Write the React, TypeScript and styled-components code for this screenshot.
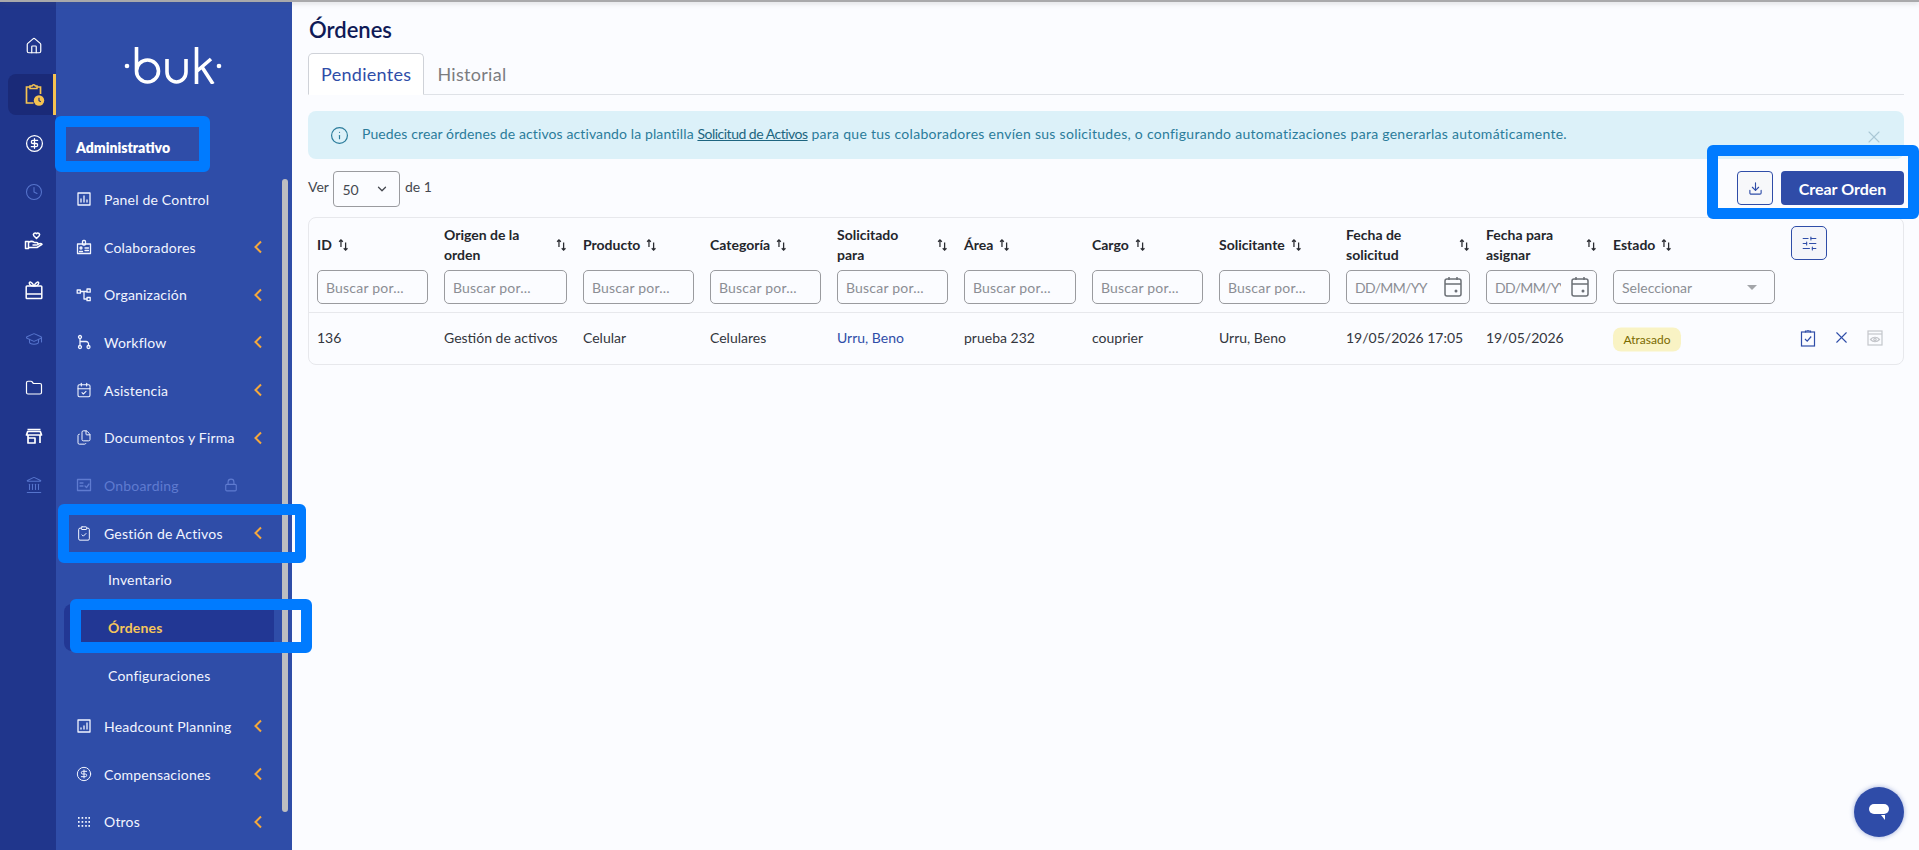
import React from "react";
import styled, { createGlobalStyle } from "styled-components";
import {
  House, CircleDollarSign, Clock, GraduationCap, Folder, Landmark,
  CalendarCheck, Files, Lock, ClipboardCheck, Info, X, ChevronDown, Download,
  SlidersHorizontal,
} from "lucide-react";

const Global = createGlobalStyle`
  html, body { margin: 0; padding: 0; height: 850px; overflow: hidden; }
  body { font-family: Lato, "Noto Sans", sans-serif; font-size: 14px; color: #33363d; background: #fbfcff; }
  * { box-sizing: border-box; }
`;

const Page = styled.div`
  position: relative;
  display: flex;
  width: 1919px;
  height: 850px;
  overflow: hidden;
`;
const TopShade = styled.div`
  position: absolute;
  left: 0; right: 0; top: 0;
  height: 2px;
  background: #a9a9ab;
  box-shadow: 0 1px 5px rgba(90, 90, 90, 0.35);
`;
const Rail = styled.aside`
  width: 56px;
  flex: none;
  background: #20368c;
  padding: 25.5px 0 0 8px;
  display: flex;
  flex-direction: column;
  gap: 7.8px;
`;
const RailItem = styled.div<{ $active?: boolean; $dim?: boolean }>`
  height: 41px;
  width: 48px;
  display: flex;
  align-items: center;
  justify-content: center;
  padding-left: 7px;
  color: ${(p) => (p.$dim ? "#5674cc" : "#ffffff")};
  border-radius: 8px 0 0 8px;
  background: ${(p) => (p.$active ? "#1a2a78" : "transparent")};
  border-right: 3px solid ${(p) => (p.$active ? "#f5c351" : "transparent")};
`;
const Sidebar = styled.aside`
  position: relative;
  width: 236px;
  flex: none;
  background: #2f4da8;
  padding-top: 47px;
  color: #fff;
`;
const LogoWrap = styled.div`
  padding-left: 68px;
  height: 37px;
  display: flex;
`;
const SectionTitle = styled.div`
  margin: 52px 0 15.5px 20px;
  height: 24px;
  line-height: 24px;
  font-weight: 800;
  font-size: 14px;
  color: #fff;
`;
const Nav = styled.nav`
  display: flex;
  flex-direction: column;
`;
const MenuItem = styled.div<{ $dim?: boolean; $gap?: number }>`
  height: 47.7px;
  margin-top: ${(p) => p.$gap ?? 0}px;
  display: flex;
  align-items: center;
  padding: 0 30px 0 20px;
  color: ${(p) => (p.$dim ? "#5f7bd0" : "#f2f5ff")};
  font-size: 14px;
  letter-spacing: 0.2px;
`;
const MenuIcon = styled.span`
  width: 16px;
  height: 16px;
  margin-right: 12px;
  display: flex;
  align-items: center;
  justify-content: center;
`;
const MenuLabel = styled.span`
  flex: 1;
  white-space: nowrap;
`;
const LockMark = styled.span`
  margin-right: 24px;
  display: flex;
`;
const SubItem = styled.div<{ $active?: boolean; $first?: boolean }>`
  height: 47.7px;
  margin: ${(p) => (p.$first ? "-1px" : "0")} 18px 0 8px;
  padding-left: 44px;
  display: flex;
  align-items: center;
  border-radius: 8px 0 0 8px;
  letter-spacing: 0.2px;
  color: ${(p) => (p.$active ? "#f6c65a" : "#f2f5ff")};
  font-weight: ${(p) => (p.$active ? 700 : 400)};
  background: ${(p) => (p.$active ? "#223794" : "transparent")};
`;
const ScrollThumb = styled.div`
  position: absolute;
  left: 226px;
  top: 179px;
  width: 6px;
  height: 633px;
  border-radius: 3px;
  background: #bdbec1;
`;
const Main = styled.main`
  flex: 1;
  min-width: 0;
  background: #fbfcff;
  padding: 16px 15px 0 16px;
`;
const Title = styled.h1`
  margin: 0 0 9px 1px;
  font-size: 22px;
  line-height: 28px;
  font-weight: 600;
  color: #0f1a56;
`;
const Tabs = styled.div`
  display: flex;
  height: 42px;
  border-bottom: 1px solid #dfe2e7;
`;
const Tab = styled.div<{ $active?: boolean }>`
  height: ${(p) => (p.$active ? "42px" : "41px")};
  display: flex;
  align-items: center;
  padding: 0 12px;
  font-size: 18px;
  letter-spacing: 0.3px;
  color: ${(p) => (p.$active ? "#2f4da8" : "#7b7c80")};
  background: ${(p) => (p.$active ? "#fff" : "transparent")};
  border: 1px solid ${(p) => (p.$active ? "#cfd2d8" : "transparent")};
  border-bottom-color: ${(p) => (p.$active ? "#fff" : "transparent")};
  border-radius: 5px 5px 0 0;
`;
const Alert = styled.div`
  margin-top: 16px;
  height: 48px;
  background: #dcf1f9;
  border-radius: 8px;
  display: flex;
  align-items: center;
  padding-left: 22px;
  color: #2b7c9b;
  font-size: 14px;
`;
const AlertText = styled.span`
  margin-left: 13px;
  white-space: nowrap;
  letter-spacing: 0.11px;
  transform: translateY(-2px);
`;
const AlertLink = styled.a`
  color: #1d6580;
  text-decoration: underline;
  letter-spacing: -0.5px;
`;
const AlertTail = styled.span`
  letter-spacing: 0.28px;
`;
const AlertClose = styled.span`
  margin-left: auto;
  margin-right: 20px;
  margin-top: 4px;
  color: #aac8d6;
  display: flex;
`;
const Controls = styled.div`
  margin-top: 12px;
  height: 36px;
  display: flex;
  align-items: flex-start;
  justify-content: space-between;
`;
const Pager = styled.div`
  display: flex;
  align-items: center;
  height: 36px;
  gap: 4.5px;
  color: #45484f;
  padding-bottom: 6px;
`;
const PageSelect = styled.div`
  width: 67px;
  height: 36px;
  margin-bottom: -6px;
  border: 1px solid #9a9b9f;
  border-radius: 4px;
  display: flex;
  align-items: center;
  justify-content: space-between;
  padding: 0 10px 0 8px;
  color: #45484f;
`;
const Actions = styled.div`
  display: flex;
  gap: 8px;
`;
const IconButton = styled.button`
  width: 36px;
  height: 34px;
  padding: 0;
  background: #f7f8fa;
  border: 1px solid #2f4da8;
  border-radius: 4px;
  color: #2f4da8;
  display: flex;
  align-items: center;
  justify-content: center;
`;
const PrimaryButton = styled.button`
  width: 123px;
  height: 34px;
  background: #2f4ca8;
  color: #fff;
  border: 0;
  border-radius: 4px;
  font: 700 16px Lato, sans-serif;
`;
const TableCard = styled.div`
  margin-top: 10px;
  border: 1px solid #e7e8ec;
  border-radius: 8px;
  height: 148px;
`;
const Table = styled.table`
  width: 100%;
  table-layout: fixed;
  border-collapse: separate;
  border-spacing: 0;
`;
const Th = styled.th`
  padding: 8px;
  text-align: left;
  font-weight: 700;
  vertical-align: top;
  border-bottom: 1px solid #e7e8ec;
  color: #24262c;
`;
const HeadLabel = styled.div<{ $split?: boolean }>`
  height: 38px;
  margin-bottom: 6px;
  display: flex;
  align-items: center;
  justify-content: ${(p) => (p.$split ? "space-between" : "flex-start")};
  gap: 6px;
  line-height: 20px;
  font-size: 14px;
`;
const FilterInput = styled.input`
  display: block;
  width: 100%;
  height: 34px;
  border: 1px solid #9a9b9f;
  border-radius: 5px;
  background: transparent;
  padding: 0 8px;
  font: 400 14px Lato, sans-serif;
  letter-spacing: 0.2px;
  &::placeholder { color: #8b8e94; opacity: 1; }
`;
const DateBox = styled.div`
  height: 34px;
  border: 1px solid #9a9b9f;
  border-radius: 5px;
  display: flex;
  align-items: center;
  padding: 0 7px 0 8px;
  color: #6b6f76;
`;
const DateField = styled.input`
  flex: 1;
  min-width: 0;
  width: 10px;
  border: 0;
  padding: 0;
  margin-right: 10px;
  background: transparent;
  font: 400 14px Lato, sans-serif;
  letter-spacing: -0.7px;
  &::placeholder { color: #8b8e94; opacity: 1; }
`;
const SelectBox = styled.div`
  height: 34px;
  border: 1px solid #9a9b9f;
  border-radius: 5px;
  display: flex;
  align-items: center;
  justify-content: space-between;
  padding: 0 17px 0 8px;
  color: #8b8e94;
  font-weight: 400;
`;
const Caret = styled.span`
  width: 0;
  height: 0;
  border-left: 5px solid transparent;
  border-right: 5px solid transparent;
  border-top: 5px solid #a3a5a9;
`;
const ConfigButton = styled.button`
  width: 36px;
  height: 34px;
  padding: 0;
  display: flex;
  align-items: center;
  justify-content: center;
  background: #f4f5fa;
  border: 1px solid #2f4da8;
  border-radius: 5px;
  color: #2f4da8;
`;
const Td = styled.td`
  height: 52px;
  padding: 0 8px 3px;
  color: #33363d;
  white-space: nowrap;
`;
const PersonLink = styled.a`
  color: #2f4da8;
`;
const Badge = styled.span`
  display: inline-flex;
  align-items: center;
  justify-content: center;
  width: 68px;
  height: 24px;
  border-radius: 8px;
  background: #f9f3c4;
  color: #7a6a00;
  font-size: 12px;
  transform: translateY(1.5px);
`;
const RowActions = styled.div`
  display: flex;
  align-items: center;
  gap: 16px;
  padding-left: 9px;
  color: #2f4da8;
`;
const ChatBubble = styled.div`
  position: absolute;
  left: 1854px;
  top: 787px;
  width: 50px;
  height: 50px;
  border-radius: 50%;
  background: #2f4ca8;
  box-shadow: 0 0 5px rgba(47, 76, 168, 0.45);
  display: flex;
  align-items: center;
  justify-content: center;
`;
const Mark = styled.div<{ $x: number; $y: number; $w: number; $h: number }>`
  position: absolute;
  left: ${(p) => p.$x}px;
  top: ${(p) => p.$y}px;
  width: ${(p) => p.$w}px;
  height: ${(p) => p.$h}px;
  border: 11px solid #007bff;
  border-radius: 6px;
`;

const Logo = () => (
  <svg width="100" height="37" viewBox="0 0 100 37" fill="none" stroke="#fff" strokeWidth="3.6">
    <circle cx="3" cy="19" r="2.3" fill="#fff" stroke="none" />
    <path d="M12.5 0V24a11 11 0 1 0 22 0a11 11 0 1 0-22 0" />
    <path d="M43 12V25a9.5 10 0 0 0 19 0V12" />
    <path d="M72.5 0V37M72.5 24.5L87 12M78 20L89 37" />
    <circle cx="95" cy="19" r="2.3" fill="#fff" stroke="none" />
  </svg>
);

const Glyph = ({ children, size = 16 }: { children: React.ReactNode; size?: number }) => (
  <svg width={size} height={size} viewBox="0 0 16 16" fill="none" stroke="currentColor" strokeWidth="1.3" strokeLinecap="round" strokeLinejoin="round">
    {children}
  </svg>
);

const ClipAlert = () => (
  <svg width="22" height="24" viewBox="0 0 22 24" fill="none">
    <path d="M7 4H3.5v16h7M14 4h3.5v7" stroke="#f5c351" strokeWidth="1.7" />
    <path d="M7 5.5V3h2a1.8 1.8 0 0 1 3.4 0H14v2.5z" stroke="#f5c351" strokeWidth="1.5" />
    <circle cx="16" cy="17.5" r="5.2" fill="#f5c351" />
    <path d="M16 14.8v3l1.8 1" stroke="#1a2a78" strokeWidth="1.1" />
  </svg>
);
const HandIcon = () => (
  <svg width="20" height="20" viewBox="0 0 20 20" fill="none" stroke="currentColor" strokeWidth="1.5" strokeLinejoin="round" strokeLinecap="round">
    <path d="M12.5 7.5L9.8 4.8a1.7 1.7 0 0 1 2.7-2.1a1.7 1.7 0 0 1 2.7 2.1z" />
    <path d="M1.5 10.5h3v7h-3zM4.5 11.5c2-1.5 4-1.5 6 0h2.2a1 1 0 0 1 0 2.5H9M5 16.5h8l5-3.2c-1-1.2-2.2-1-4 0" />
  </svg>
);
const GiftBox = () => (
  <svg width="18" height="20" viewBox="0 0 18 20" fill="none" stroke="currentColor" strokeWidth="1.5" strokeLinejoin="round">
    <rect x="1.2" y="6" width="15.6" height="12.5" rx="0.8" />
    <path d="M1.2 14h15.6M9 6C7 1.5 3.8 1 4.4 3.6C4.8 5.4 7 6 9 6C11 1.5 14.2 1 13.6 3.6C13.2 5.4 11 6 9 6" />
  </svg>
);
const ShopIcon = () => (
  <svg width="18" height="18" viewBox="0 0 18 18" fill="none" stroke="currentColor" strokeWidth="1.7" strokeLinejoin="round">
    <path d="M2.5 2.5h13M1.5 8l1.2-3.5h12.6L16.5 8z" />
    <path d="M3 8v8M15 8v8M3 11h7v5H3z" />
  </svg>
);
const PanelIcon = () => (
  <Glyph><rect x="2" y="2" width="12" height="12" /><path d="M5 11V8M8 11V5M11 11V9" /></Glyph>
);
const BadgeIcon = () => (
  <Glyph><rect x="1.5" y="5" width="13" height="9.5" /><rect x="6.5" y="1.5" width="3" height="4.5" rx="1" /><circle cx="5" cy="9" r="1" /><path d="M3.5 12.5h3M9 9h3.5M9 11.5h3.5" /></Glyph>
);
const OrgIcon = () => (
  <Glyph><rect x="1.2" y="3" width="3.2" height="3.2" /><rect x="11" y="2" width="3.2" height="3.2" /><rect x="11" y="10.5" width="3.2" height="3.2" /><path d="M4.5 4.5H11M8 4.5V12H11" /></Glyph>
);
const FlowIcon = () => (
  <Glyph><circle cx="4" cy="3" r="1.5" /><circle cx="4" cy="13" r="1.5" /><circle cx="12.5" cy="13" r="1.5" /><path d="M4 4.5v7M4 7.5h6a2.5 2.5 0 0 1 2.5 3v1" /></Glyph>
);
const BoardIcon = () => (
  <Glyph><rect x="1.5" y="2.5" width="13" height="11" /><path d="M4 6h3M4 9h3M9 9l1.5 1.5L13 7" /></Glyph>
);
const HeadIcon = () => (
  <Glyph><rect x="2" y="2" width="12" height="12" /><path d="M5 11V10M8 11V8M11 11V5" /></Glyph>
);
const DotsIcon = () => (
  <svg width="12" height="10" viewBox="0 0 12 10" fill="currentColor">
    {[0, 4, 8].map((y) =>
      [0, 3.6, 7.2, 10.4].map((x) => <rect key={`${x}-${y}`} x={x} y={y} width="1.6" height="1.8" />)
    )}
  </svg>
);
const SortIcon = () => (
  <svg width="11" height="14" viewBox="0 0 13 15" fill="none" stroke="#2a2c32" strokeWidth="1.5" style={{ flex: "none" }}>
    <path d="M3.5 10V1.5M1.3 3.7l2.2-2.2 2.2 2.2M9 4.5v9M6.8 11.3L9 13.5l2.2-2.2" />
  </svg>
);
const CalendarIcon = () => (
  <svg width="18" height="22" viewBox="0 0 18 22" fill="none" stroke="currentColor" strokeWidth="1.5" style={{ flex: "none" }}>
    <rect x="1" y="3" width="16" height="17" rx="2" />
    <path d="M1 8h16M5 1v3M13 1v3" />
    <circle cx="12" cy="15" r="1.5" fill="currentColor" stroke="none" />
  </svg>
);
const Chevron = () => (
  <svg width="8" height="14" viewBox="0 0 8 14" fill="none" stroke="#f5a83b" strokeWidth="2" style={{ flex: "none" }}>
    <path d="M7 1.5L1.5 7L7 12.5" />
  </svg>
);
const EyeBox = () => (
  <svg width="16" height="16" viewBox="0 0 16 16" fill="none" stroke="#c4c6cb" strokeWidth="1.2">
    <rect x="1" y="1" width="14" height="14" />
    <path d="M1 4h14" />
    <path d="M3.5 9.5C6 6.5 10 6.5 12.5 9.5C10 12.5 6 12.5 3.5 9.5z" />
    <circle cx="8" cy="9.5" r="1.2" />
  </svg>
);
const TaskIcon = () => (
  <svg width="16" height="18" viewBox="0 0 16 18" fill="none" stroke="currentColor" strokeWidth="1.2">
    <rect x="1.5" y="3" width="13" height="14" />
    <path d="M5.5 3.5V2h1.7a1 1 0 0 1 1.6 0h1.7v1.5M5 10l2.2 2.2L11.2 7.5" />
  </svg>
);
const Tail = () => (
  <svg width="22" height="18" viewBox="0 0 22 18">
    <rect x="1" y="1" width="20" height="10" rx="5" fill="#fff" />
    <path d="M13 12h4v5z" fill="#fff" />
  </svg>
);

const railItems = [
  { icon: <House size={18} strokeWidth={1.6} /> },
  { icon: <ClipAlert />, active: true },
  { icon: <CircleDollarSign size={19} strokeWidth={1.6} /> },
  { icon: <Clock size={18} strokeWidth={1.4} />, dim: true },
  { icon: <HandIcon /> },
  { icon: <GiftBox /> },
  { icon: <GraduationCap size={18} strokeWidth={1.4} />, dim: true },
  { icon: <Folder size={18} strokeWidth={1.6} /> },
  { icon: <ShopIcon /> },
  { icon: <Landmark size={18} strokeWidth={1.4} />, dim: true },
];

const columns: { label: React.ReactNode; split?: boolean; w: number }[] = [
  { label: "ID", w: 127 },
  { label: <>Origen de la<br />orden</>, split: true, w: 139 },
  { label: "Producto", w: 127 },
  { label: "Categoría", w: 127 },
  { label: <>Solicitado<br />para</>, split: true, w: 127 },
  { label: "Área", w: 128 },
  { label: "Cargo", w: 127 },
  { label: "Solicitante", w: 127 },
  { label: <>Fecha de<br />solicitud</>, split: true, w: 140 },
  { label: <>Fecha para<br />asignar</>, split: true, w: 127 },
  { label: "Estado", w: 178 },
];

export default function App() {
  return (
    <Page>
      <Global />
      <Rail>
        {railItems.map((r, i) => (
          <RailItem key={i} $active={r.active} $dim={r.dim}>{r.icon}</RailItem>
        ))}
      </Rail>
      <Sidebar>
        <LogoWrap><Logo /></LogoWrap>
        <SectionTitle>Administrativo</SectionTitle>
        <Nav>
          <MenuItem><MenuIcon><PanelIcon /></MenuIcon><MenuLabel>Panel de Control</MenuLabel></MenuItem>
          <MenuItem><MenuIcon><BadgeIcon /></MenuIcon><MenuLabel>Colaboradores</MenuLabel><Chevron /></MenuItem>
          <MenuItem><MenuIcon><OrgIcon /></MenuIcon><MenuLabel>Organización</MenuLabel><Chevron /></MenuItem>
          <MenuItem><MenuIcon><FlowIcon /></MenuIcon><MenuLabel>Workflow</MenuLabel><Chevron /></MenuItem>
          <MenuItem><MenuIcon><CalendarCheck size={16} strokeWidth={1.6} /></MenuIcon><MenuLabel>Asistencia</MenuLabel><Chevron /></MenuItem>
          <MenuItem><MenuIcon><Files size={17} strokeWidth={1.5} /></MenuIcon><MenuLabel>Documentos y Firma</MenuLabel><Chevron /></MenuItem>
          <MenuItem $dim><MenuIcon><BoardIcon /></MenuIcon><MenuLabel>Onboarding</MenuLabel><LockMark><Lock size={14} strokeWidth={1.9} /></LockMark></MenuItem>
          <MenuItem><MenuIcon><ClipboardCheck size={17} strokeWidth={1.5} /></MenuIcon><MenuLabel>Gestión de Activos</MenuLabel><Chevron /></MenuItem>
          <SubItem $first>Inventario</SubItem>
          <SubItem $active>Órdenes</SubItem>
          <SubItem>Configuraciones</SubItem>
          <MenuItem $gap={3.5}><MenuIcon><HeadIcon /></MenuIcon><MenuLabel>Headcount Planning</MenuLabel><Chevron /></MenuItem>
          <MenuItem><MenuIcon><CircleDollarSign size={16} strokeWidth={1.5} /></MenuIcon><MenuLabel>Compensaciones</MenuLabel><Chevron /></MenuItem>
          <MenuItem><MenuIcon><DotsIcon /></MenuIcon><MenuLabel>Otros</MenuLabel><Chevron /></MenuItem>
        </Nav>
        <ScrollThumb />
      </Sidebar>
      <Main>
        <Title>Órdenes</Title>
        <Tabs>
          <Tab $active>Pendientes</Tab>
          <Tab>Historial</Tab>
        </Tabs>
        <Alert>
          <Info size={19} strokeWidth={1.5} />
          <AlertText>
            Puedes crear órdenes de activos activando la plantilla <AlertLink>Solicitud de Activos</AlertLink><AlertTail> para que tus colaboradores envíen sus solicitudes, o configurando automatizaciones para generarlas automáticamente.</AlertTail>
          </AlertText>
          <AlertClose><X size={20} strokeWidth={1.3} /></AlertClose>
        </Alert>
        <Controls>
          <Pager>
            Ver
            <PageSelect>50<ChevronDown size={14} strokeWidth={2.2} /></PageSelect>
            de 1
          </Pager>
          <Actions>
            <IconButton><Download size={15} strokeWidth={1.8} /></IconButton>
            <PrimaryButton>Crear Orden</PrimaryButton>
          </Actions>
        </Controls>
        <TableCard>
          <Table>
            <colgroup>
              {columns.map((c, i) => <col key={i} style={{ width: c.w }} />)}
              <col />
            </colgroup>
            <thead>
              <tr>
                {columns.map((c, i) => (
                  <Th key={i}>
                    <HeadLabel $split={c.split}><span>{c.label}</span><SortIcon /></HeadLabel>
                    {i === 8 || i === 9 ? (
                      <DateBox><DateField readOnly placeholder="DD/MM/YY" /><CalendarIcon /></DateBox>
                    ) : i === 10 ? (
                      <SelectBox>Seleccionar<Caret /></SelectBox>
                    ) : (
                      <FilterInput readOnly placeholder="Buscar por..." />
                    )}
                  </Th>
                ))}
                <Th><ConfigButton><SlidersHorizontal size={17} strokeWidth={1.5} /></ConfigButton></Th>
              </tr>
            </thead>
            <tbody>
              <tr>
                <Td>136</Td>
                <Td>Gestión de activos</Td>
                <Td>Celular</Td>
                <Td>Celulares</Td>
                <Td><PersonLink>Urru, Beno</PersonLink></Td>
                <Td>prueba 232</Td>
                <Td>couprier</Td>
                <Td>Urru, Beno</Td>
                <Td>19/05/2026 17:05</Td>
                <Td>19/05/2026</Td>
                <Td><Badge>Atrasado</Badge></Td>
                <Td>
                  <RowActions>
                    <TaskIcon />
                    <X size={19} strokeWidth={1.4} />
                    <EyeBox />
                  </RowActions>
                </Td>
              </tr>
            </tbody>
          </Table>
        </TableCard>
      </Main>
      <ChatBubble><Tail /></ChatBubble>
      <TopShade />
      <Mark $x={55} $y={116} $w={155} $h={56} />
      <Mark $x={58} $y={504} $w={248} $h={59} />
      <Mark $x={70} $y={599} $w={242} $h={54} />
      <Mark $x={1707} $y={145} $w={212} $h={74} />
    </Page>
  );
}
